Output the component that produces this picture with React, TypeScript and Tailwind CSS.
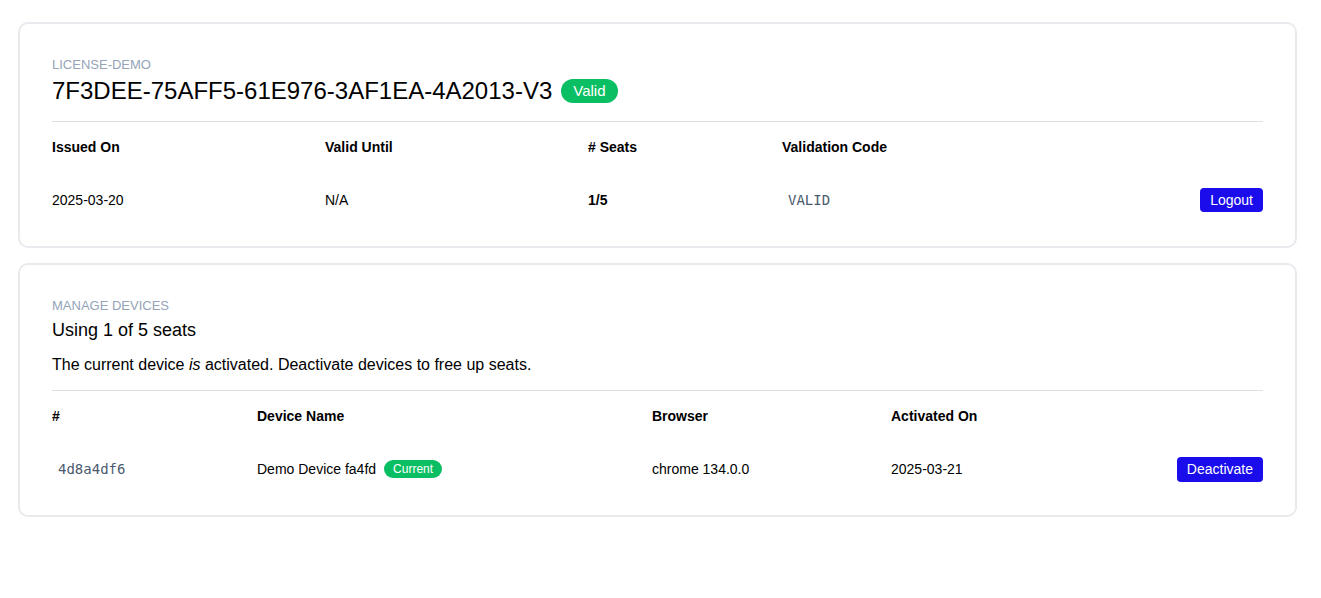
export default function App() {
  return (
    <div className="min-h-screen bg-white pt-[22px] pr-6 pl-[18px] font-['Liberation_Sans',Arial,sans-serif] text-black">
      <div className="flex flex-col gap-[15px]">
        {/* License card */}
        <div className="rounded-[10px] border-2 border-[#e8eaee] px-8 pt-8 pb-[22px]">
          <div className="text-[13px] leading-[18px] text-[#94a3b8]">LICENSE-DEMO</div>
          <div className="mt-px flex h-8 items-center gap-[9px]">
            <span className="text-2xl leading-[30px]">7F3DEE-75AFF5-61E976-3AF1EA-4A2013-V3</span>
            <span className="rounded-full bg-[#0abf63] px-3 text-[15px] leading-6 text-white">Valid</span>
          </div>
          <div className="mt-[14px] border-t border-[#dcdfe4]" />
          <div className="grid grid-cols-[273px_263px_194px_1fr_auto] text-sm">
            <div className="flex h-[50px] items-center font-bold">Issued On</div>
            <div className="flex h-[50px] items-center font-bold">Valid Until</div>
            <div className="flex h-[50px] items-center font-bold"># Seats</div>
            <div className="flex h-[50px] items-center font-bold">Validation Code</div>
            <div />
            <div className="mt-1 flex h-12 items-center">2025-03-20</div>
            <div className="mt-1 flex h-12 items-center">N/A</div>
            <div className="mt-1 flex h-12 items-center font-bold">1/5</div>
            <div className="mt-1 flex h-12 items-center">
              <code className="px-1.5 font-['DejaVu_Sans_Mono',monospace] text-sm text-[#4b5a70]">VALID</code>
            </div>
            <div className="mt-1 flex h-12 items-center justify-end">
              <button className="h-6 rounded-[4px] bg-[#1a0ceb] px-[10px] text-sm leading-6 text-white">Logout</button>
            </div>
          </div>
        </div>

        {/* Devices card */}
        <div className="rounded-[10px] border-2 border-[#e8eaee] px-8 pt-8 pb-[22px]">
          <div className="text-[13px] leading-[18px] text-[#94a3b8]">MANAGE DEVICES</div>
          <div className="mt-[3px] text-[18px] leading-6">Using 1 of 5 seats</div>
          <p className="mt-[11px] text-base leading-6">
            The current device <em>is</em> activated. Deactivate devices to free up seats.
          </p>
          <div className="mt-[13px] border-t border-[#dcdfe4]" />
          <div className="grid grid-cols-[205px_395px_239px_1fr_auto] text-sm">
            <div className="flex h-[50px] items-center font-bold">#</div>
            <div className="flex h-[50px] items-center font-bold">Device Name</div>
            <div className="flex h-[50px] items-center font-bold">Browser</div>
            <div className="flex h-[50px] items-center font-bold">Activated On</div>
            <div />
            <div className="mt-1 flex h-12 items-center">
              <code className="px-1.5 font-['DejaVu_Sans_Mono',monospace] text-sm text-[#4b5a70]">4d8a4df6</code>
            </div>
            <div className="mt-1 flex h-12 items-center gap-2">
              <span>Demo Device fa4fd</span>
              <span className="rounded-full bg-[#0abf63] px-[9px] text-xs leading-[18px] text-white">Current</span>
            </div>
            <div className="mt-1 flex h-12 items-center">chrome 134.0.0</div>
            <div className="mt-1 flex h-12 items-center">2025-03-21</div>
            <div className="mt-1 flex h-12 items-center justify-end">
              <button className="h-[25px] rounded-[4px] bg-[#1a0ceb] px-[10px] text-sm leading-[25px] text-white">Deactivate</button>
            </div>
          </div>
        </div>
      </div>
    </div>
  );
}
